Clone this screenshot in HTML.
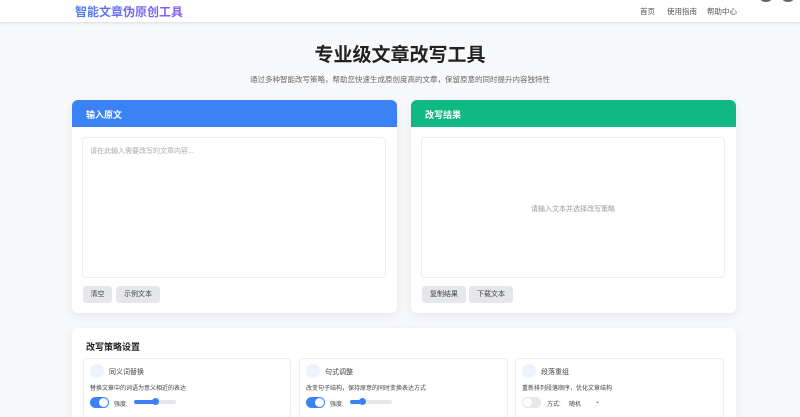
<!DOCTYPE html>
<html><head><meta charset="utf-8"><style>
*{box-sizing:border-box;margin:0;padding:0}
html,body{width:800px;height:417px;overflow:hidden}
body{background:#f8f9fb;font-family:"Liberation Sans","Noto Sans CJK SC",sans-serif;position:relative;color:#333}
.abs{position:absolute}
.hdr{left:0;top:0;width:800px;height:22px;background:#fff;box-shadow:0 1px 3px rgba(0,0,0,.12)}
.logo{left:75px;top:3px;font-size:12px;font-weight:bold;background:linear-gradient(90deg,#4f7df3,#8b5cf6);-webkit-background-clip:text;color:transparent;white-space:nowrap}
.nav{top:6px;font-size:7.5px;color:#555}
.card{background:#fff;border-radius:6px;box-shadow:0 3px 10px rgba(0,0,0,.08);overflow:hidden}
.ch{height:27px;color:#fff;font-size:9px;font-weight:bold;padding:8px 0 0 14px}
.ta{border:1px solid #eee;border-radius:4px}
.btn{background:#e5e7eb;border-radius:3px;font-size:7px;color:#444;text-align:center;line-height:17px;height:17px}
.sc{border:1px solid #eee;border-radius:4px;background:#fff}
.circ{width:14px;height:14px;border-radius:50%;background:#eef2fd}
.t7{font-size:7px;color:#444;white-space:nowrap}
.t6{font-size:6px;color:#444;white-space:nowrap}
.tog{width:19px;height:11px;border-radius:6px;background:#3b82f6}
.tog::after{content:"";position:absolute;right:1px;top:1px;width:9px;height:9px;border-radius:50%;background:#fff}
</style></head><body>
<div class="abs hdr"></div>
<div class="abs logo">智能文章伪原创工具</div>
<div class="abs nav" style="left:640px">首页</div>
<div class="abs nav" style="left:667px">使用指南</div>
<div class="abs nav" style="left:707px">帮助中心</div>
<div class="abs" style="left:760px;top:-6px;width:12px;height:8px;border-radius:50%;background:#666"></div>
<div class="abs" style="left:782px;top:-6px;width:12px;height:8px;border-radius:50%;background:#666"></div>
<div class="abs" style="left:0;width:800px;top:40px;text-align:center;font-size:19px;font-weight:bold;color:#222">专业级文章改写工具</div>
<div class="abs" style="left:0;width:800px;top:74px;text-align:center;font-size:7.5px;color:#666">通过多种智能改写策略，帮助您快速生成原创度高的文章，保留原意的同时提升内容独特性</div>

<div class="abs card" style="left:72px;top:100px;width:325px;height:213px">
<div class="ch" style="background:#3b82f6">输入原文</div>
<div class="abs ta" style="left:10px;top:37px;width:304px;height:141px"><div class="t7" style="color:#aaa;padding:8px 7px">请在此输入需要改写的文章内容...</div></div>
<div class="abs btn" style="left:11px;top:186px;width:29px">清空</div>
<div class="abs btn" style="left:44px;top:186px;width:44px">示例文本</div>
</div>
<div class="abs card" style="left:411px;top:100px;width:325px;height:213px">
<div class="ch" style="background:#10b981">改写结果</div>
<div class="abs ta" style="left:10px;top:37px;width:304px;height:141px"><div class="t7" style="color:#999;text-align:center;padding-top:66px">请输入文本并选择改写策略</div></div>
<div class="abs btn" style="left:11px;top:186px;width:44px">复制结果</div>
<div class="abs btn" style="left:58px;top:186px;width:44px">下载文本</div>
</div>

<div class="abs card" style="left:72px;top:328px;width:664px;height:100px">
<div class="abs" style="left:14px;top:12px;font-size:9px;font-weight:bold;color:#222">改写策略设置</div>
</div>
<div class="abs sc" style="left:83px;top:358px;width:208px;height:60px"></div>
<div class="abs sc" style="left:299px;top:358px;width:209px;height:60px"></div>
<div class="abs sc" style="left:515px;top:358px;width:209px;height:60px"></div>

<div class="abs circ" style="left:90px;top:364px"></div><div class="abs t7" style="left:109px;top:367px">同义词替换</div>
<div class="abs t6" style="left:90px;top:383px">替换文章中的词语为意义相近的表达</div>
<div class="abs tog" style="left:90px;top:397px"></div><div class="abs t6" style="left:114px;top:399px">强度:</div>
<div class="abs" style="left:134px;top:400px;width:42px;height:4px;border-radius:2px;background:linear-gradient(90deg,#3b82f6 50%,#e5e7eb 50%)"></div>
<div class="abs" style="left:152px;top:398px;width:7px;height:7px;border-radius:50%;background:#3b82f6"></div>

<div class="abs circ" style="left:306px;top:364px"></div><div class="abs t7" style="left:325px;top:367px">句式调整</div>
<div class="abs t6" style="left:306px;top:383px">改变句子结构，保持原意的同时变换表达方式</div>
<div class="abs tog" style="left:306px;top:397px"></div><div class="abs t6" style="left:330px;top:399px">强度:</div>
<div class="abs" style="left:350px;top:400px;width:42px;height:4px;border-radius:2px;background:linear-gradient(90deg,#3b82f6 30%,#e5e7eb 30%)"></div>
<div class="abs" style="left:359px;top:398px;width:7px;height:7px;border-radius:50%;background:#3b82f6"></div>

<div class="abs circ" style="left:522px;top:364px"></div><div class="abs t7" style="left:541px;top:367px">段落重组</div>
<div class="abs t6" style="left:522px;top:383px">重新排列段落顺序，优化文章结构</div>
<div class="abs" style="left:522px;top:397px;width:19px;height:11px;border-radius:6px;background:#e5e7eb"><div class="abs" style="left:1px;top:1px;width:9px;height:9px;border-radius:50%;background:#fff"></div></div>
<div class="abs t6" style="left:547px;top:399px">方式:</div>
<div class="abs t6" style="left:569px;top:399px">随机</div>
<div class="abs t6" style="left:595px;top:398px">⌄</div>
</body></html>
